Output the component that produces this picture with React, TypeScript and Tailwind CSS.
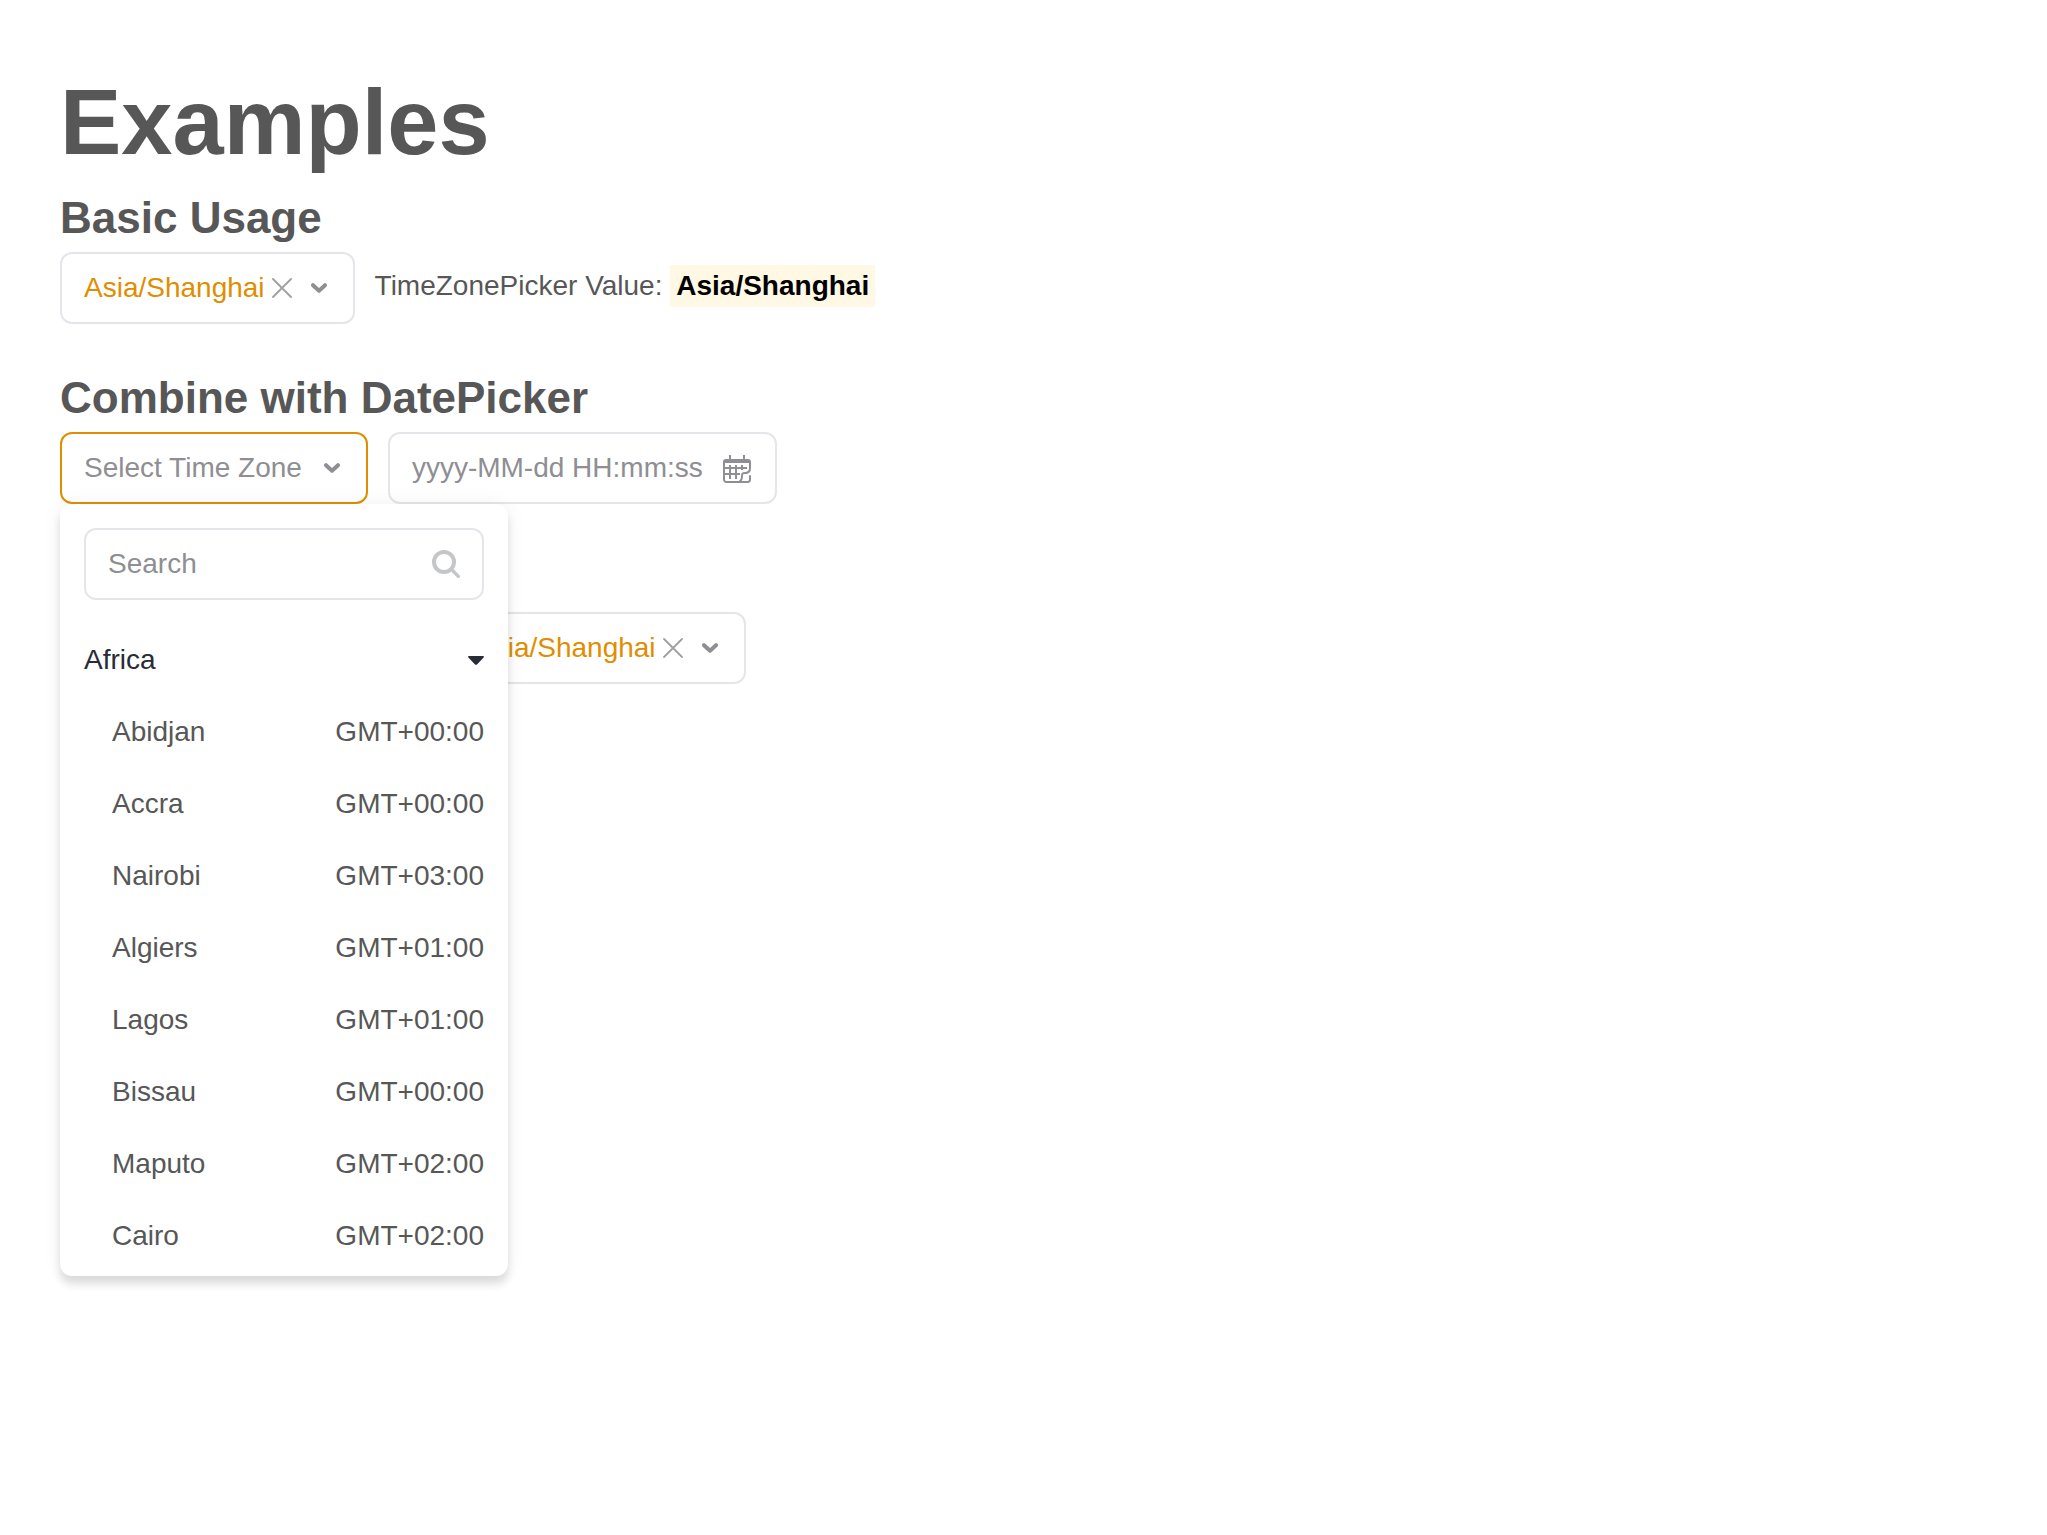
import { useState } from "react";

const ZONES = [
  ["Abidjan", "GMT+00:00"],
  ["Accra", "GMT+00:00"],
  ["Nairobi", "GMT+03:00"],
  ["Algiers", "GMT+01:00"],
  ["Lagos", "GMT+01:00"],
  ["Bissau", "GMT+00:00"],
  ["Maputo", "GMT+02:00"],
  ["Cairo", "GMT+02:00"],
];

function ChevronIcon() {
  return (
    <svg width="16" height="12" viewBox="0 0 16 12" fill="none" stroke="#8e8e93" strokeWidth="4" strokeLinecap="round" strokeLinejoin="round">
      <path d="M2 3.2 8 8.7 14 3.2" />
    </svg>
  );
}

function CloseIcon() {
  return (
    <svg width="20" height="20" viewBox="0 0 20 20" fill="none" stroke="#a0a0a0" strokeWidth="1.8" strokeLinecap="round">
      <path d="M1 1l18 18M19 1L1 19" />
    </svg>
  );
}

function SearchIcon() {
  return (
    <svg width="28" height="28" viewBox="0 0 28 28" fill="none" stroke="#c5c6c7" strokeLinecap="round">
      <circle cx="12" cy="12" r="10" strokeWidth="4" />
      <path d="M20 20l6.4 6.4" strokeWidth="3.4" />
    </svg>
  );
}

function CalendarIcon() {
  return (
    <svg width="28" height="30" viewBox="0 -2 28 30" fill="none" stroke="#8e8e93" strokeWidth="2">
      <path d="M7 0v5M21 0v5" />
      <path d="M0 8V7a3 3 0 0 1 3-3h22a3 3 0 0 1 3 3v1z" fill="#8e8e93" stroke="none" />
      <path d="M1 7v17.5A2.5 2.5 0 0 0 3.5 27h21a2.5 2.5 0 0 0 2.5-2.5V21" strokeLinecap="round" />
      <path d="M27 7v6c0 3-2 5-5 5-3 0-3 1-3 3 0 3-1 5-3 6" />
      <path d="M1 13h23M1 19h16M7 10v14M13 10v14M19 10v5" />
    </svg>
  );
}

function ZonePicker({ value, onClear }: { value: string; onClear: () => void }) {
  return (
    <div className="flex h-[72px] items-center rounded-xl border-2 border-[#e5e5ea] bg-white pl-[22px] pr-[26px]">
      <button className="text-[#e08e00]">{value}</button>
      <button aria-label="Clear" className="ml-[7px]" onClick={onClear}>
        <CloseIcon />
      </button>
      <button aria-label="Open" className="ml-[19px]">
        <ChevronIcon />
      </button>
    </div>
  );
}

function ZoneMenu() {
  return (
    <div className="absolute left-0 top-full z-10 w-[448px] rounded-xl bg-white px-6 pb-1 pt-6 shadow-[0_8px_8px_rgba(0,0,0,0.12),0_0_20px_rgba(0,0,0,0.06)]">
      <label className="mb-6 flex h-[72px] items-center rounded-xl border-2 border-[#e5e5ea] px-[22px]">
        <input
          type="text"
          aria-label="Search"
          placeholder="Search"
          className="min-w-0 flex-1 outline-none placeholder:text-[#8e8e93]"
        />
        <SearchIcon />
      </label>
      <button className="flex h-[72px] w-full items-center justify-between text-[#272c36]">
        Africa
        <svg width="16" height="9" viewBox="0 0 16 9" fill="#272c36">
          <path d="M1 0h14c1 0 1.2 1 .6 1.5L9 8.4c-.6.6-1.4.6-2 0L.4 1.5C-.2 1 0 0 1 0z" />
        </svg>
      </button>
      <ul>
        {ZONES.map(([city, offset]) => (
          <li key={city}>
            <button className="flex h-[72px] w-full items-center justify-between pl-7">
              <span>{city}</span>
              <span>{offset}</span>
            </button>
          </li>
        ))}
      </ul>
    </div>
  );
}

export default function App() {
  const [zone, setZone] = useState("Asia/Shanghai");

  return (
    <main className="min-h-screen bg-white px-[60px] pb-10 pt-[60px] font-['Liberation_Sans',Arial,sans-serif] text-[28px] leading-10 text-[#575757]">
      <h1 className="text-[92px] font-bold leading-[124px]">Examples</h1>

      <section className="mb-10">
        <h4 className="text-[44px] font-bold leading-[68px]">Basic Usage</h4>
        <div className="flex items-start gap-5">
          <ZonePicker value={zone} onClear={() => setZone("")} />
          <p className="pt-[13px] leading-[42px]">
            TimeZonePicker Value:{" "}
            <mark className="inline-block bg-[#fff8e5] px-[6px] font-bold text-black">{zone}</mark>
          </p>
        </div>
      </section>

      <section>
        <h4 className="text-[44px] font-bold leading-[68px]">Combine with DatePicker</h4>
        <div className="flex items-start gap-5">
          <div className="relative">
            <button className="flex h-[72px] items-center gap-[22px] rounded-xl border-2 border-[#e08e00] bg-white pl-[22px] pr-[26px] text-[#8e8e93]">
              Select Time Zone
              <ChevronIcon />
            </button>
            <ZoneMenu />
          </div>
          <label className="flex h-[72px] items-center rounded-xl border-2 border-[#e5e5ea] pl-[22px] pr-6">
            <input
              type="text"
              aria-label="Date"
              placeholder="yyyy-MM-dd HH:mm:ss"
              className="w-[311px] outline-none placeholder:text-[#8e8e93]"
            />
            <CalendarIcon />
          </label>
        </div>
      </section>

      <section className="flex pl-[391px] pt-[108px]">
        <ZonePicker value={zone} onClear={() => setZone("")} />
      </section>
    </main>
  );
}
